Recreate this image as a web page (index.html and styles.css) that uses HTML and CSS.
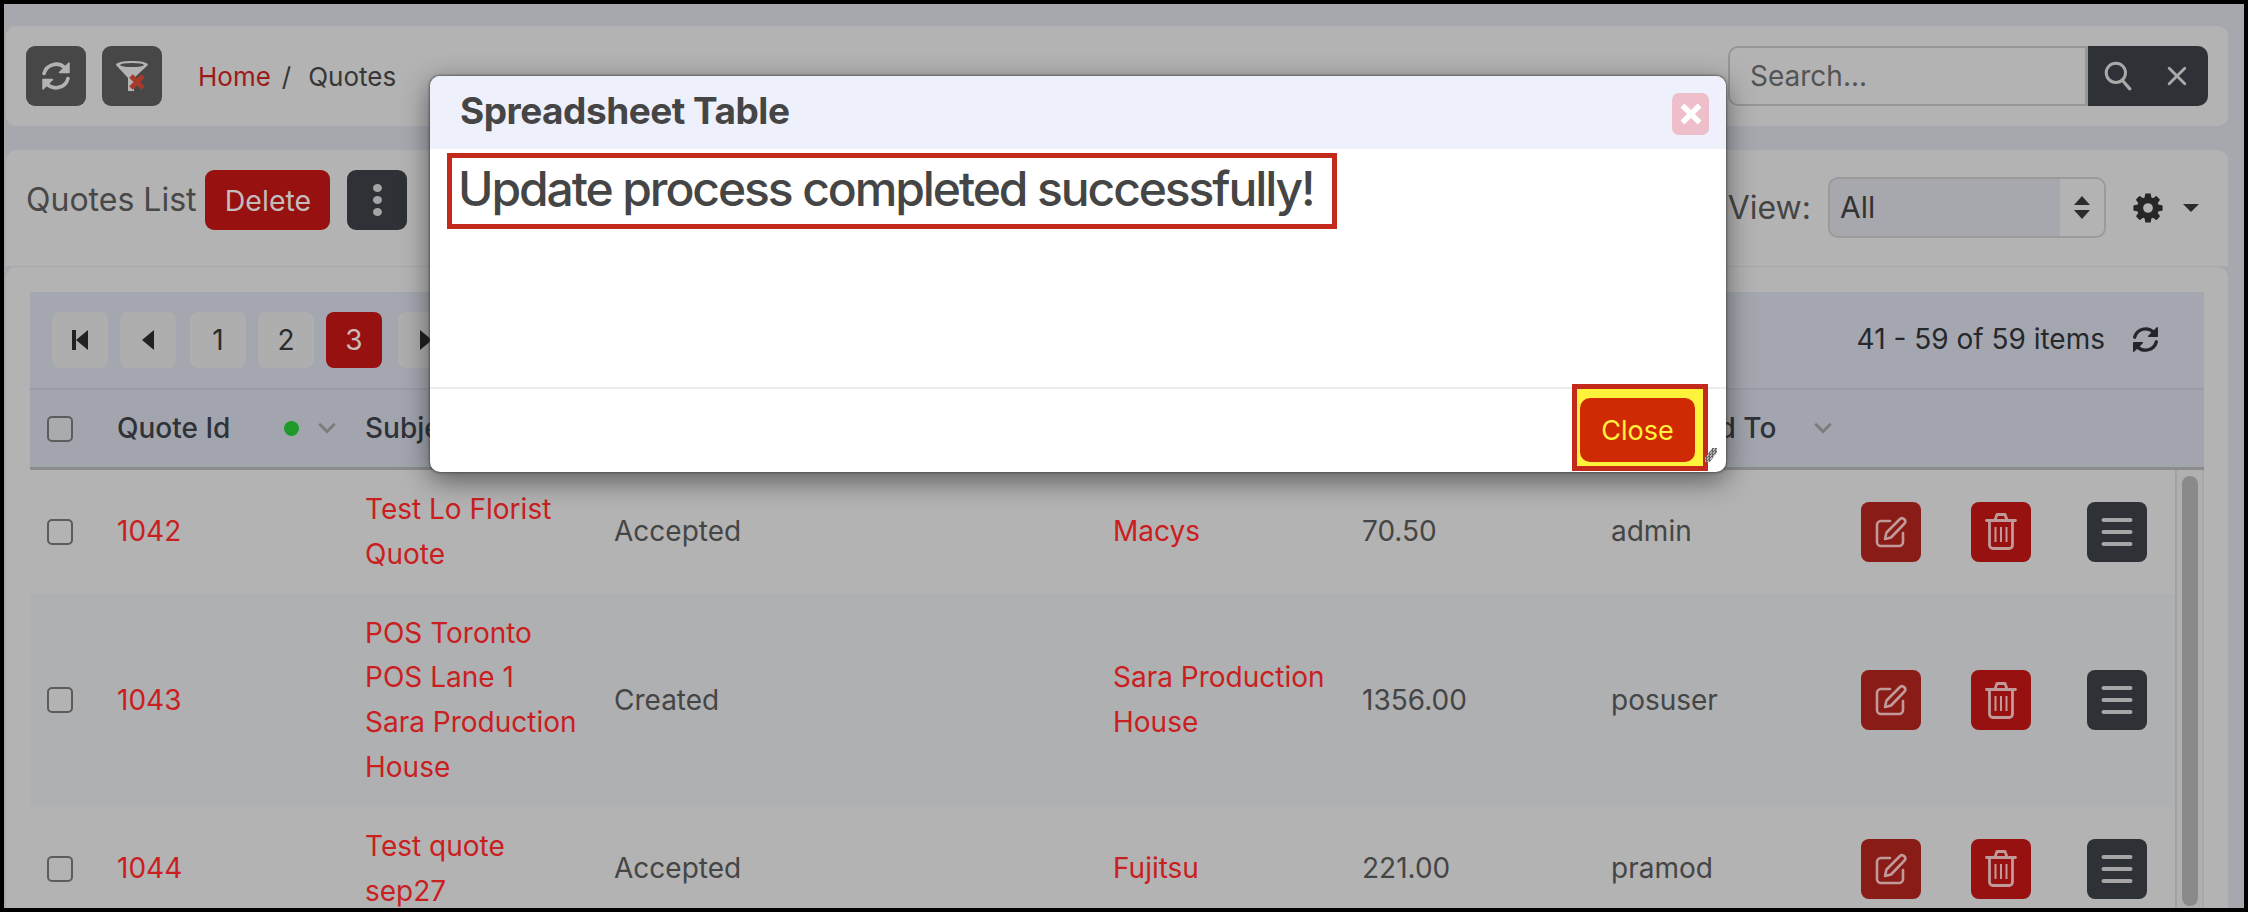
FILE: index.html
```html
<!DOCTYPE html>
<html lang="en">
<head>
    <meta charset="UTF-8">
    <meta name="viewport" content="width=device-width, initial-scale=1.0">
    <title>Quotes</title>
    <link rel="stylesheet" href="styles.css">
</head>
<body>
    <svg class="sprites" width="0" height="0">
        <symbol id="i-refresh" viewBox="0 0 32 32">
            <path fill="none" stroke="currentColor" stroke-width="3.600" stroke-linecap="round" d="M4 13.500A12.500 12.500 0 0 1 25 8M28 18.500A12.500 12.500 0 0 1 7 24"/>
            <path fill="currentColor" stroke="currentColor" stroke-width="1.500" stroke-linejoin="round" d="M29 3v9.500h-9.500zM3 29v-9.500h9.500z"/>
        </symbol>
        <symbol id="i-gear" viewBox="0 0 1792 1792">
            <path fill="currentColor" d="M1152 896q0-106-75-181t-181-75-181 75-75 181 75 181 181 75 181-75 75-181zm512-109v222q0 12-8 23t-20 13l-185 28q-19 54-39 91 35 50 107 138 10 12 10 25t-9 23q-27 37-99 108t-94 71q-12 0-26-9l-138-108q-44 23-91 38-16 136-29 186-7 28-36 28h-222q-14 0-24.5-8.5t-11.5-21.5l-28-184q-49-16-90-37l-141 107q-10 9-25 9-14 0-25-11-126-114-165-168-7-10-7-23 0-12 8-23 15-21 51-66.5t54-70.5q-27-50-41-99l-183-27q-13-2-21-12.5t-8-23.5v-222q0-12 8-23t19-13l186-28q14-46 39-92-40-57-107-138-10-12-10-24 0-10 9-23 26-36 98.5-107.5t94.5-71.5q13 0 26 10l138 107q44-23 91-38 16-136 29-186 7-28 36-28h222q14 0 24.5 8.5t11.5 21.5l28 184q49 16 90 37l142-107q9-9 24-9 13 0 25 10 129 119 165 170 7 8 7 22 0 12-8 23-15 21-51 66.5t-54 70.5q26 50 41 98l183 28q13 2 21 12.5t8 23.5z"/>
        </symbol>
        <symbol id="i-edit" viewBox="0 0 32 32">
            <path fill="none" stroke="currentColor" stroke-width="2.6" stroke-linecap="round" d="M15 5H6a4 4 0 0 0-4 4v17a4 4 0 0 0 4 4h18a4 4 0 0 0 4-4v-9"/>
            <path fill="none" stroke="currentColor" stroke-width="2.6" stroke-linejoin="round" d="M10 23l1.500-6.500L25 3a3.200 3.200 0 0 1 4.500 4.500L16 21.500z"/>
        </symbol>
        <symbol id="i-trash" viewBox="0 0 32 37">
            <path fill="none" stroke="currentColor" stroke-width="2.8" stroke-linecap="round" stroke-linejoin="round" d="M1.500 7.500h29M10 7l2-5.500h8L22 7M4.500 8v24a3.500 3.500 0 0 0 3.500 3.500h16a3.500 3.500 0 0 0 3.500-3.500V8"/>
            <path fill="none" stroke="currentColor" stroke-width="2" d="M10.500 14v15M16 14v15M21.500 14v15"/>
        </symbol>
        <symbol id="i-menu" viewBox="0 0 32 30">
            <path fill="none" stroke="currentColor" stroke-width="4" stroke-linecap="round" d="M2.500 3h27M2.500 15h27M2.500 27h27"/>
        </symbol>
        <symbol id="i-chevron" viewBox="0 0 16 10">
            <path fill="none" stroke="currentColor" stroke-width="2.400" d="M1.500 1.500L8 8l6.500-6.500"/>
        </symbol>
    </svg>

    <div class="frame">
        <header class="card topbar">
            <button class="icon-btn btn-grey"><svg class="ico-refresh"><use href="#i-refresh"/></svg></button>
            <button class="icon-btn btn-grey">
                <svg class="ico-filter" viewBox="0 0 32 30">
                    <path fill="#b3b3b3" d="M0 4c0-2.500 7-4 16-4s16 1.500 16 4L18 17v13h-6V17z"/>
                    <ellipse cx="16" cy="4" rx="12" ry="2" fill="#474747"/>
                    <path stroke="#a83a2c" stroke-width="5" d="M15 15l12 12M27 15L15 27"/>
                </svg>
            </button>
            <nav class="crumbs">
                <a href="#">Home</a>
                <span class="crumb-sep">/</span>
                <span>Quotes</span>
            </nav>
            <div class="search">
                <input type="text" placeholder="Search...">
                <div class="search-btns">
                    <svg class="ico-search" viewBox="0 0 26 28"><circle cx="11" cy="11" r="9" fill="none" stroke="currentColor" stroke-width="2.800"/><path stroke="currentColor" stroke-width="3" stroke-linecap="round" d="M17 18l7 8"/></svg>
                    <svg class="ico-x" viewBox="0 0 18 18"><path stroke="currentColor" stroke-width="2.600" stroke-linecap="round" d="M2 2l14 14M16 2L2 16"/></svg>
                </div>
            </div>
        </header>

        <section class="card listbar">
            <h2 class="list-title">Quotes List</h2>
            <button class="delete-btn">Delete</button>
            <button class="icon-btn btn-slate kebab"><span></span><span></span><span></span></button>
            <div class="view-tools">
                <span class="view-label">View:</span>
                <div class="view-select">
                    <span class="view-value">All</span>
                    <span class="view-arrows"><i class="arrow-up"></i><i class="arrow-down"></i></span>
                </div>
                <svg class="ico-gear"><use href="#i-gear"/></svg>
                <i class="caret"></i>
            </div>
        </section>

        <section class="card gridcard">
            <div class="grid-toolbar">
                <div class="pager">
                    <a class="page" href="#"><svg class="ico-page" viewBox="0 0 16 20"><path fill="currentColor" d="M0 0h4v20H0zM16 0v20L4 10z"/></svg></a>
                    <a class="page" href="#"><svg class="ico-page" viewBox="0 0 16 20"><path fill="currentColor" d="M14 0v20L2 10z"/></svg></a>
                    <a class="page page-num" href="#">1</a>
                    <a class="page" href="#">2</a>
                    <a class="page active" href="#">3</a>
                    <a class="page page-next" href="#"><svg class="ico-page" viewBox="0 0 16 20"><path fill="currentColor" d="M2 0v20l12-10z"/></svg></a>
                </div>
                <div class="pager-info">
                    <span>41 - 59 of 59 items</span>
                    <svg class="ico-refresh dark"><use href="#i-refresh"/></svg>
                </div>
            </div>

            <div class="grid-row grid-head">
                <div class="cell"><input class="check" type="checkbox"></div>
                <div class="cell head-cell">Quote Id <span class="head-tools"><i class="dot"></i><svg class="ico-chevron"><use href="#i-chevron"/></svg></span></div>
                <div class="cell head-cell">Subject</div>
                <div class="cell head-cell"></div>
                <div class="cell head-cell"></div>
                <div class="cell head-cell"></div>
                <div class="cell head-cell">Assigned To <span class="head-tools"><svg class="ico-chevron"><use href="#i-chevron"/></svg></span></div>
                <div class="cell"></div>
            </div>

            <div class="grid-body">
                <div class="rows">
                    <div class="grid-row">
                        <div class="cell"><input class="check" type="checkbox"></div>
                        <div class="cell"><a href="#">1042</a></div>
                        <div class="cell"><a href="#">Test Lo Florist Quote</a></div>
                        <div class="cell">Accepted</div>
                        <div class="cell"><a href="#">Macys</a></div>
                        <div class="cell">70.50</div>
                        <div class="cell">admin</div>
                        <div class="cell actions">
                            <button class="act act-edit"><svg class="ico-act"><use href="#i-edit"/></svg></button>
                            <button class="act act-trash"><svg class="ico-act tall"><use href="#i-trash"/></svg></button>
                            <button class="act act-menu"><svg class="ico-act"><use href="#i-menu"/></svg></button>
                        </div>
                    </div>
                    <div class="grid-row alt">
                        <div class="cell"><input class="check" type="checkbox"></div>
                        <div class="cell"><a href="#">1043</a></div>
                        <div class="cell"><a href="#">POS Toronto POS Lane 1 Sara Production House</a></div>
                        <div class="cell">Created</div>
                        <div class="cell"><a href="#">Sara Production House</a></div>
                        <div class="cell">1356.00</div>
                        <div class="cell">posuser</div>
                        <div class="cell actions">
                            <button class="act act-edit"><svg class="ico-act"><use href="#i-edit"/></svg></button>
                            <button class="act act-trash"><svg class="ico-act tall"><use href="#i-trash"/></svg></button>
                            <button class="act act-menu"><svg class="ico-act"><use href="#i-menu"/></svg></button>
                        </div>
                    </div>
                    <div class="grid-row">
                        <div class="cell"><input class="check" type="checkbox"></div>
                        <div class="cell"><a href="#">1044</a></div>
                        <div class="cell"><a href="#">Test quote sep27</a></div>
                        <div class="cell">Accepted</div>
                        <div class="cell"><a href="#">Fujitsu</a></div>
                        <div class="cell">221.00</div>
                        <div class="cell">pramod</div>
                        <div class="cell actions">
                            <button class="act act-edit"><svg class="ico-act"><use href="#i-edit"/></svg></button>
                            <button class="act act-trash"><svg class="ico-act tall"><use href="#i-trash"/></svg></button>
                            <button class="act act-menu"><svg class="ico-act"><use href="#i-menu"/></svg></button>
                        </div>
                    </div>
                </div>
                <div class="scroll-track"><div class="scroll-thumb"></div></div>
            </div>
        </section>

        <div class="modal">
            <div class="modal-head">
                <h3>Spreadsheet Table</h3>
                <button class="modal-x"><svg viewBox="0 0 18 18"><path stroke="#fff" stroke-width="4.500" d="M2 2l14 14M16 2L2 16"/></svg></button>
            </div>
            <div class="modal-body">
                <p class="modal-msg">Update process completed successfully!</p>
            </div>
            <div class="modal-foot">
                <div class="close-ring"><button class="close-btn">Close</button></div>
            </div>
            <i class="resize-grip"></i>
        </div>
    </div>
</body>
</html>
```

FILE: styles.css
```css
* {
    box-sizing: border-box;
}

body {
    margin: 0;
    font-family: 'Inter', 'Liberation Sans', sans-serif;
    font-size: 28px;
    color: #454545;
}

.sprites {
    position: absolute;
}

.frame {
    position: relative;
    width: 2248px;
    height: 912px;
    border: 4px solid #000;
    padding: 22px 16px 0 2px;
    background-color: #a6a8ae;
    overflow: hidden;
}

button {
    font-family: inherit;
    border: none;
    padding: 0;
}

a {
    color: #c9201f;
    text-decoration: none;
}

.card {
    background-color: #b3b3b3;
    border-radius: 10px 10px 0 0;
}

.topbar {
    display: flex;
    align-items: center;
    height: 100px;
    padding: 0 20px;
    border-radius: 10px;
}

.icon-btn {
    display: flex;
    align-items: center;
    justify-content: center;
    width: 60px;
    height: 60px;
    border-radius: 9px;
    flex: none;
}

.btn-grey {
    background-color: #474747;
    color: #b3b3b3;
    margin-right: 16px;
}

.btn-slate {
    background-color: #2e3136;
    color: #a5a5a5;
}

.ico-refresh {
    width: 32px;
    height: 32px;
}

.ico-refresh.dark {
    width: 29px;
    height: 29px;
    color: #23262b;
}

.ico-filter {
    width: 32px;
    height: 30px;
}

.crumbs {
    display: flex;
    align-items: center;
    margin-left: 20px;
    font-size: 26px;
    color: #363636;
}

.crumbs a {
    color: #9c1a1a;
}

.crumb-sep {
    margin: 0 17px 0 11px;
}

.search {
    display: flex;
    margin-left: auto;
    height: 60px;
    width: 480px;
}

.search input {
    width: 360px;
    height: 60px;
    padding: 0 20px;
    font-family: inherit;
    font-size: 28px;
    background-color: #b3b3b3;
    border: 2px solid #969696;
    border-right-width: 3px;
    border-radius: 10px 0 0 10px;
}

.search input::placeholder {
    color: #545454;
}

.search-btns {
    display: flex;
    align-items: center;
    width: 120px;
    padding-left: 16px;
    background-color: #2e3136;
    color: #a9a9a9;
    border-radius: 0 10px 10px 0;
}

.ico-search {
    width: 28px;
    height: 30px;
}

.ico-x {
    width: 20px;
    height: 20px;
    margin-left: 35px;
}

.listbar {
    display: flex;
    align-items: flex-start;
    height: 116px;
    margin-top: 24px;
    padding: 20px 29px 0 20px;
}

.list-title {
    margin: 0;
    font-size: 32px;
    font-weight: 400;
    line-height: 60px;
    color: #484848;
}

.delete-btn {
    width: 125px;
    height: 60px;
    margin-left: 9px;
    background-color: #96110f;
    color: #c3bcbc;
    font-size: 28.5px;
    border-radius: 9px;
}

.kebab {
    flex-direction: column;
    gap: 4px;
    margin-left: 17px;
}

.kebab span {
    width: 9px;
    height: 8px;
    border-radius: 50%;
    background-color: #a5a5a5;
}

.view-tools {
    display: flex;
    align-items: center;
    margin-left: auto;
    height: 61px;
    margin-top: 7px;
}

.view-label {
    font-size: 32px;
    margin-right: 17px;
}

.view-select {
    display: flex;
    width: 278px;
    height: 61px;
    background-color: #a6a8ae;
    border: 2px solid #9a9a9a;
    border-radius: 10px;
    overflow: hidden;
}

.view-value {
    flex: 1;
    padding-left: 10px;
    font-size: 30px;
    line-height: 57px;
    color: #333;
}

.view-arrows {
    display: flex;
    flex-direction: column;
    align-items: center;
    justify-content: center;
    gap: 5px;
    width: 44px;
    background-color: #b3b3b3;
}

.arrow-up,
.arrow-down,
.caret {
    width: 0;
    height: 0;
    border-left: 8px solid transparent;
    border-right: 8px solid transparent;
}

.arrow-up {
    border-bottom: 9px solid #2c2c2c;
}

.arrow-down {
    border-top: 9px solid #2c2c2c;
}

.ico-gear {
    width: 34px;
    height: 34px;
    margin-left: 25px;
    color: #262626;
}

.caret {
    margin-left: 18px;
    border-top: 8px solid #2c2c2c;
}

.gridcard {
    height: 660px;
    margin-top: 1px;
    padding: 25px 24px 0;
}

.grid-toolbar {
    display: flex;
    justify-content: space-between;
    align-items: flex-start;
    height: 98px;
    padding: 20px 44px 0 22px;
    background-color: #a4a7af;
    border-bottom: 2px solid #9a9cab;
}

.pager {
    display: flex;
}

.page {
    display: flex;
    align-items: center;
    justify-content: center;
    width: 56px;
    height: 56px;
    margin-right: 12px;
    background-color: #aeaeae;
    border-radius: 8px;
    color: #2c2c2c;
    font-size: 28px;
}

.page-num {
    margin-left: 2px;
}

.page.active {
    background-color: #96110f;
    color: #c7bcbc;
}

.page-next {
    margin-left: 4px;
}

.ico-page {
    width: 16px;
    height: 20px;
    color: #222;
}

.pager-info {
    display: flex;
    align-items: center;
    gap: 26px;
    height: 54px;
    color: #26282c;
}

.grid-row {
    display: grid;
    grid-template-columns: 87px 248px 249px 499px 249px 249px 250px 314px;
    align-items: center;
    line-height: 44.8px;
}

.grid-head {
    height: 80px;
    background-color: #a2a5ae;
    border-bottom: 3px solid #8c8c8c;
    color: #2f3238;
    font-weight: 500;
}

.cell {
    min-width: 0;
}

.cell:first-child {
    padding-left: 17px;
    display: flex;
}

.head-cell {
    display: flex;
    align-items: center;
    white-space: nowrap;
    padding-right: 28px;
}

.head-tools {
    display: flex;
    align-items: center;
    margin-left: auto;
}

.dot {
    width: 15px;
    height: 15px;
    margin-right: 18px;
    border-radius: 50%;
    background-color: #1f9a2a;
}

.ico-chevron {
    width: 20px;
    height: 12px;
    color: #7d7d7d;
}

.check {
    width: 26px;
    height: 26px;
    margin: 0;
    appearance: none;
    background-color: #b3b3b3;
    border: 2px solid #5c5c5c;
    border-radius: 5px;
}

.grid-head .check {
    background-color: #a9abae;
}

.grid-body {
    position: relative;
    display: flex;
}

.rows {
    width: 2145px;
    flex: none;
}

.rows .grid-row {
    padding: 17px 0;
}

.rows .cell a {
    display: block;
}

.rows .cell:nth-child(3) {
    padding-right: 35px;
}

.alt {
    background-color: #afb0b2;
}

.actions {
    display: flex;
}

.act {
    display: flex;
    align-items: center;
    justify-content: center;
    flex: none;
    width: 60px;
    height: 60px;
    border-radius: 8px;
    color: #c09a99;
}

.act-edit {
    background-color: #8a1c17;
}

.act-trash {
    margin-left: 50px;
    background-color: #96110f;
}

.act-menu {
    margin-left: 56px;
    background-color: #2e3136;
    color: #a5a5a5;
}

.ico-act {
    width: 32px;
    height: 32px;
}

.ico-act.tall {
    height: 37px;
}

.act-menu .ico-act {
    height: 30px;
}

.scroll-track {
    flex: none;
    width: 29px;
    padding: 6px 0 0 5px;
    background-color: #b0b0b0;
    border-left: 2px solid #a1a1a1;
    border-right: 2px solid #a8a8a8;
}

.scroll-thumb {
    width: 16px;
    height: 430px;
    border-radius: 8px;
    background-color: #8a8a8a;
}

/* dialog sits over the dimmed page */
.modal {
    position: absolute;
    left: 426px;
    top: 72px;
    display: flex;
    flex-direction: column;
    width: 1296px;
    height: 396px;
    background-color: #fff;
    border-radius: 10px;
    box-shadow: 0 0 2px 1px rgba(60, 60, 60, 0.6), 0 8px 28px rgba(0, 0, 0, 0.5);
}

.modal-head {
    display: flex;
    align-items: center;
    justify-content: space-between;
    height: 73px;
    padding: 0 17px 0 30px;
    background-color: #eef0fb;
    border-radius: 10px 10px 0 0;
}

.modal-head h3 {
    margin: 0 0 4px;
    font-size: 37px;
    font-weight: 700;
    letter-spacing: -0.5px;
    color: #454545;
}

.modal-x {
    display: flex;
    align-items: center;
    justify-content: center;
    width: 37px;
    height: 42px;
    margin-top: 3px;
    background-color: #eebfca;
    border-radius: 7px;
}

.modal-x svg {
    width: 22px;
    height: 22px;
}

.modal-body {
    flex: 1;
    padding: 4px 17px 0;
}

.modal-msg {
    height: 76px;
    width: 890px;
    margin: 0;
    padding: 0 6px;
    border: 5px solid #c42a1c;
    font-size: 48px;
    font-weight: 500;
    letter-spacing: -2.1px;
    line-height: 62px;
    color: #454545;
    white-space: nowrap;
}

.modal-foot {
    position: relative;
    height: 85px;
    border-top: 2px solid #ececec;
}

.close-ring {
    position: absolute;
    right: 18px;
    top: -5px;
    width: 136px;
    height: 87px;
    padding: 9px 8px 4px 3px;
    background-color: #fff23b;
    border: 5px solid #c42a1c;
}

.close-btn {
    display: block;
    width: 100%;
    height: 100%;
    background-color: #d02a04;
    color: #fff23b;
    font-size: 27px;
    border-radius: 10px;
}

.resize-grip {
    position: absolute;
    right: 9px;
    bottom: 10px;
    width: 12px;
    height: 14px;
    background: repeating-conic-gradient(#666 0 25%, #b5b5b5 0 50%) 0 0 / 3px 3px;
    clip-path: polygon(60% 0, 100% 0, 100% 30%, 40% 100%, 0 100%, 0 70%);
}
```
